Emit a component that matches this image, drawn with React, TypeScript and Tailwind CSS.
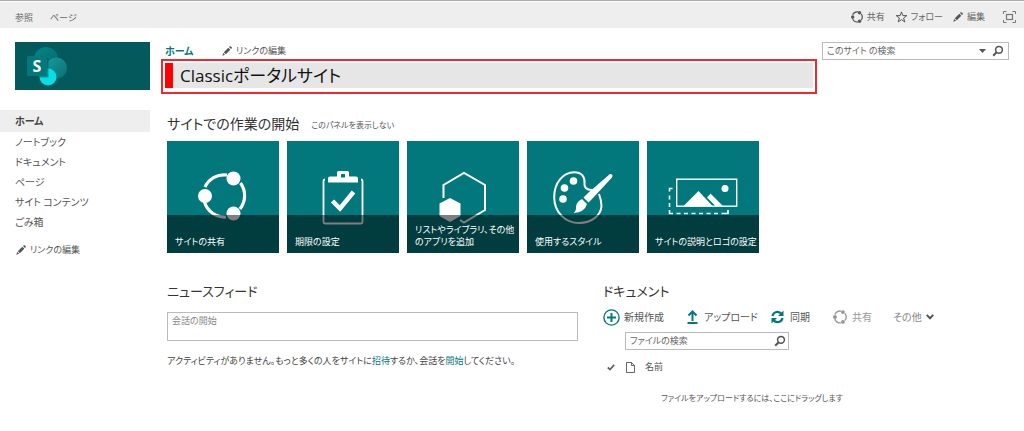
import type { ReactNode } from "react";

const teal = "#03787c";

function Pencil() {
  return (
    <svg width="10" height="10" viewBox="0 0 10 10" fill="#555" aria-hidden="true">
      <path d="M0.3 9.7 1.2 6.9 3.1 8.8Z M1.8 6.2 6.3 1.7 8.3 3.7 3.8 8.2Z M7 1 7.8 0.2Q8.4 0 8.9 0.4L9.6 1.1Q10 1.6 9.8 2.2L9 3Z" />
    </svg>
  );
}

function ShareRing({ size, color }: { size: number; color: string }) {
  const stroke = size > 20 ? 3.2 : 5;
  return (
    <svg width={size} height={size} viewBox="0 0 50 50" fill="none" aria-hidden="true">
      <path d="M7 16A21 21 0 0 1 29 4 M42.500 12A21.500 21.500 0 0 1 42 38 M28 46A21 21 0 0 1 6.500 31" stroke={color} strokeWidth={stroke} />
      <circle cx="35.500" cy="7.500" r="7" fill={color} />
      <circle cx="7" cy="25" r="7" fill={color} />
      <circle cx="35.500" cy="42.500" r="7" fill={color} />
    </svg>
  );
}

function Magnifier() {
  return (
    <svg width="12" height="12" viewBox="0 0 12 12" fill="none" stroke="#555" aria-hidden="true">
      <circle cx="7" cy="4.800" r="3.400" strokeWidth="1.500" />
      <path d="M4.600 7.300 1.200 10.800" strokeWidth="2" />
    </svg>
  );
}

function SiteLogo() {
  return (
    <svg width="42" height="42" viewBox="0 0 42 42" aria-hidden="true">
      <defs>
        <linearGradient id="lobe" x1="0" y1="0" x2="1" y2="1">
          <stop offset="0" stopColor="#038387" />
          <stop offset="1" stopColor="#036c70" />
        </linearGradient>
        <linearGradient id="lobeRight" x1="0" y1="0" x2="1" y2="1">
          <stop offset="0" stopColor="#179a9e" />
          <stop offset="1" stopColor="#0b7074" />
        </linearGradient>
      </defs>
      <circle cx="19" cy="13" r="12" fill="url(#lobe)" />
      <circle cx="29.500" cy="22" r="10.500" fill="url(#lobeRight)" />
      <circle cx="21" cy="31" r="8.500" fill="#06dfe6" />
      <path d="M12.500 12H21.500V31.500H12.600Z" fill="#025156" opacity="0.550" />
      <rect x="0" y="10" width="20" height="20" rx="1.500" fill="#03787c" />
      <text x="10" y="25.800" fontSize="16" fontWeight="700" fill="#fff" textAnchor="middle" fontFamily="Open Sans, sans-serif">
        S
      </text>
    </svg>
  );
}

function ClipboardArt() {
  return (
    <svg width="42" height="54" viewBox="0 0 42 54" fill="none" aria-hidden="true">
      <path d="M3 8.500Q1.500 8.500 1.500 10V51Q1.500 52.500 3 52.500H39Q40.500 52.500 40.500 51V10Q40.500 8.500 39 8.500" stroke="#fff" strokeWidth="1.800" />
      <path fillRule="evenodd" d="M6 11.500V7.500Q6 5.500 8 5.500H15V1.500Q15 0 16.500 0H25.500Q27 0 27 1.500V5.500H34Q36 5.500 36 7.500V11.500Z M19 3V6.500H23V3Z" fill="#fff" />
      <path d="M10.500 30 18 37.500 31.500 21" stroke="#fff" strokeWidth="4.500" />
    </svg>
  );
}

function HexagonArt() {
  return (
    <svg width="48" height="54" viewBox="0 0 48 54" fill="none" aria-hidden="true">
      <path d="M4.500 27V14L25 2 46 14V39L25 51.500 21 49" stroke="#fff" strokeWidth="2" />
      <path d="M11 27 21.500 32.500V45L11 51 .5 45V32.500Z" fill="#fff" />
    </svg>
  );
}

function PaletteArt() {
  return (
    <svg width="60" height="54" viewBox="0 0 60 54" fill="none" aria-hidden="true">
      <path d="M39 19C33 19 31 16 31.500 12C32 6 29 1.200 21 1.200C10 1.200 1.200 12 1.200 26C1.200 41 12 52 26 52C39 52 48 44 48.500 35C48.500 30 47.500 27 46 23" stroke="#fff" strokeWidth="2" />
      <circle cx="20.500" cy="10" r="3.800" fill="#fff" />
      <circle cx="11.500" cy="17" r="3.800" fill="#fff" />
      <circle cx="10" cy="28" r="3.800" fill="#fff" />
      <path d="M55.500 4.200Q57 2.400 59 3.600Q60.200 5.500 58.500 7L40 27 35.500 31.500 30.500 26.500 35 22Z" fill="#fff" />
      <path d="M29 28 34 33Q31.500 41.500 20.500 42Q23.500 39.500 23 35.500Q23.500 30.500 29 28Z" fill="#fff" />
    </svg>
  );
}

function PictureArt() {
  return (
    <svg width="70" height="38" viewBox="0 0 70 38" fill="none" aria-hidden="true">
      <rect x="8.700" y="1.200" width="60" height="27" stroke="#fff" strokeWidth="1.400" />
      <path d="M15.500 28 30.500 13 44.500 28Z M39 19.500 42.500 15.500 55 28H47.500Z" fill="#fff" />
      <circle cx="57" cy="10.500" r="3.500" fill="#fff" />
      <path
        d="M4.500 10.500H1.500V13.500 M1.500 17.500V21.500 M1.500 25V29 M1.500 32V35.500H5 M8.500 35.500H12.500 M16 35.500H20 M23.500 35.500H27.500 M31 35.500H35 M38.500 35.500H42.500 M46 35.500H50 M53.500 35.500H60V32"
        stroke="#fff"
        strokeWidth="1.600"
      />
    </svg>
  );
}

function Tile({ label, children, top = "top-[30px]" }: { label: ReactNode; children: ReactNode; top?: string }) {
  return (
    <a href="#" className="relative flex h-28 w-28 flex-col justify-end bg-[#03787c]">
      <span className={`absolute inset-x-0 flex justify-center ${top}`}>{children}</span>
      <span className="relative flex h-[38px] items-end bg-black/50 px-2 pb-[5px] leading-3 text-white">
        <span className="block">{label}</span>
      </span>
    </a>
  );
}

const navItems = ["ノートブック", "ドキュメント", "ページ", "サイト コンテンツ", "ごみ箱"];

export default function App() {
  return (
    <div className="bg-white pb-6 font-['Noto_Sans_CJK_JP',sans-serif] text-[9px] leading-4 whitespace-nowrap text-[#555] [font-feature-settings:'palt']">
      <div className="h-px bg-[#ababab]" />
      <div className="mt-px flex h-[26px] items-center justify-between bg-[#eee] pt-1 pr-2 pl-[15px] text-[#666]">
        <div className="flex gap-[17px] pt-px">
          <button type="button">参照</button>
          <button type="button">ページ</button>
        </div>
        <div className="flex items-center gap-[10px]">
          <button type="button" className="flex items-center gap-1">
            <ShareRing size={12} color="#555" />
            共有
          </button>
          <button type="button" className="flex items-center gap-[3px]">
            <svg width="13" height="12" viewBox="0 0 12 12" fill="none" stroke="#555" strokeWidth="1" aria-hidden="true">
              <path d="M6 .9 7.300 4.600H11.300L8.100 7 9.300 11 6 8.600 2.700 11 3.900 7 .7 4.600H4.700Z" />
            </svg>
            フォロー
          </button>
          <button type="button" className="flex items-center gap-1">
            <Pencil />
            編集
          </button>
          <button type="button" aria-label="全画面" className="ml-2">
            <svg width="13" height="12" viewBox="0 0 13 12" fill="none" stroke="#777" aria-hidden="true">
              <rect x="3.500" y="3.500" width="6" height="5" strokeWidth="1.200" />
              <path d="M.5 3V.5H3.500 M9.500.5H12.500V3 M12.500 9V11.500H9.500 M3.500 11.500H.5V9" />
            </svg>
          </button>
        </div>
      </div>

      <div className="flex pt-[14px]">
        <aside className="w-[150px] shrink-0">
          <a href="#" aria-label="サイト" className="ml-[15px] flex h-12 items-start bg-[#03595c] pt-1 pl-3">
            <SiteLogo />
          </a>
          <nav className="mt-5 text-[10px]">
            <a href="#" className="block h-[22px] bg-[#eee] pl-[15px] leading-[22px] font-bold text-[#444]">
              ホーム
            </a>
            {navItems.map((item) => (
              <a key={item} href="#" className="block h-5 pl-[15px] leading-5">
                {item}
              </a>
            ))}
            <a href="#" className="mt-2 flex h-5 items-center gap-1 pl-4 text-[9px]">
              <Pencil />
              リンクの編集
            </a>
          </nav>
        </aside>

        <main className="ml-[11px] min-w-0 flex-1">
          <div className="flex items-start">
            <div className="w-[656px]">
              <div className="flex h-[17px] items-center pl-1">
                <a href="#" className="w-[57px] text-[10px] font-bold text-[#03787c]">
                  ホーム
                </a>
                <a href="#" className="flex items-center gap-1">
                  <Pencil />
                  リンクの編集
                </a>
              </div>
              <div className="border-2 border-[#ec2a30] p-[2px] pb-1">
                <h1 className="flex h-[25px] items-center border-l-8 border-[#f00] bg-[#e6e6e6] pl-[7px] font-['Open_Sans','Noto_Sans_CJK_JP',sans-serif] text-[17px] leading-6 text-[#111]">
                  Classicポータルサイト
                </h1>
              </div>
            </div>
            <div className="ml-[5px] flex h-[18px] w-[187px] items-center border border-[#bbb] px-1">
              <input
                type="text"
                aria-label="このサイトの検索"
                placeholder="このサイト の検索"
                className="w-0 flex-1 outline-none placeholder:text-[#666]"
              />
              <button type="button" aria-label="検索範囲" className="mr-[6px]">
                <svg width="7" height="4" viewBox="0 0 7 4" fill="#555" aria-hidden="true">
                  <path d="M0 0H7L3.500 4Z" />
                </svg>
              </button>
              <button type="button" aria-label="検索">
                <Magnifier />
              </button>
            </div>
          </div>

          <section className="mt-[19px] pl-[6px]">
            <div className="flex items-end gap-3">
              <h2 className="text-sm leading-5 text-[#333]">サイトでの作業の開始</h2>
              <a href="#" className="text-[8px]">
                このパネルを表示しない
              </a>
            </div>
            <div className="mt-2 flex gap-2">
              <Tile label="サイトの共有">
                <ShareRing size={50} color="#fff" />
              </Tile>
              <Tile label="期限の設定">
                <ClipboardArt />
              </Tile>
              <Tile
                label={
                  <>
                    リストやライブラリ、その他
                    <br />
                    のアプリを追加
                  </>
                }
              >
                <HexagonArt />
              </Tile>
              <Tile label="使用するスタイル">
                <PaletteArt />
              </Tile>
              <Tile label="サイトの説明とロゴの設定" top="top-[37px]">
                <PictureArt />
              </Tile>
            </div>
          </section>

          <div className="mt-7 flex gap-[25px] pl-[6px]">
            <section className="w-[411px]">
              <h2 className="text-[13px] leading-5 text-[#333]">ニュースフィード</h2>
              <textarea
                aria-label="会話の開始"
                placeholder="会話の開始"
                className="mt-[11px] block h-[29px] w-full resize-none border border-[#bbb] px-1 leading-4 outline-none placeholder:text-[#888]"
              />
              <p className="mt-3 text-[#444]">
                アクティビティがありません。もっと多くの人をサイトに
                <a href="#" className="text-[#03787c]">招待</a>
                するか、会話を
                <a href="#" className="text-[#03787c]">開始</a>
                してください。
              </p>
            </section>

            <section>
              <h2 className="text-[13px] leading-5 text-[#333]">ドキュメント</h2>
              <div className="mt-[7px] flex h-[18px] items-center text-[10px]">
                <button type="button" className="flex w-[84px] items-center gap-1">
                  <svg width="17" height="17" viewBox="0 0 17 17" fill="none" stroke={teal} aria-hidden="true">
                    <circle cx="8.500" cy="8.500" r="7.600" strokeWidth="1.400" />
                    <path d="M8.500 4V13M4 8.500H13" strokeWidth="2" />
                  </svg>
                  新規作成
                </button>
                <button type="button" className="flex w-[84px] items-center gap-[6px]">
                  <svg width="11" height="14" viewBox="0 0 11 14" fill="none" stroke={teal} strokeWidth="2" aria-hidden="true">
                    <path d="M.5 13H10.500 M5.500 11V2 M1.500 5.500 5.500 1.500 9.500 5.500" />
                  </svg>
                  アップロード
                </button>
                <button type="button" className="flex w-[62px] items-center gap-[6px]">
                  <svg width="13" height="14" viewBox="0 0 13 14" fill="none" stroke={teal} strokeWidth="2.200" aria-hidden="true">
                    <path d="M1.500 6A5 5 0 0 1 10.500 4 M11.500 8A5 5 0 0 1 2.500 10" />
                    <path d="M12.500.5V6H7Z M.5 13.500V8H6Z" fill={teal} stroke="none" />
                  </svg>
                  同期
                </button>
                <button type="button" className="flex w-[60px] items-center gap-[5px] text-[#999]">
                  <ShareRing size={14} color="#999" />
                  共有
                </button>
                <button type="button" className="flex items-center gap-1 text-[#888]">
                  その他
                  <svg width="8" height="6" viewBox="0 0 8 6" fill="none" stroke="#555" strokeWidth="2" aria-hidden="true">
                    <path d="M.7.9 4 4.300 7.300.9" />
                  </svg>
                </button>
              </div>
              <div className="mt-[6px] ml-[22px] flex h-[18px] w-[164px] items-center border border-[#bbb] pr-[2px] pl-1">
                <input
                  type="text"
                  aria-label="ファイルの検索"
                  placeholder="ファイルの検索"
                  className="w-0 flex-1 outline-none placeholder:text-[#666]"
                />
                <button type="button" aria-label="ファイルを検索">
                  <Magnifier />
                </button>
              </div>
              <table className="mt-2">
                <thead>
                  <tr className="h-[18px] text-left">
                    <th className="w-[23px] pl-1 font-normal">
                      <svg width="8" height="7" viewBox="0 0 8 7" fill="none" stroke="#666" strokeWidth="1.800" aria-hidden="true">
                        <path d="M.8 3.500 3 5.500 7.200.8" />
                      </svg>
                    </th>
                    <th className="w-[19px] font-normal">
                      <svg width="9" height="11" viewBox="0 0 9 11" fill="none" stroke="#666" aria-hidden="true">
                        <path d="M.5.5H5.500L8.500 3.500V10.500H.5Z M5.500.5V3.500H8.500" />
                      </svg>
                    </th>
                    <th className="font-normal">名前</th>
                  </tr>
                </thead>
              </table>
              <p className="mt-[14px] ml-[58px] text-[8px]">ファイルをアップロードするには、ここにドラッグします</p>
            </section>
          </div>
        </main>
      </div>
    </div>
  );
}
